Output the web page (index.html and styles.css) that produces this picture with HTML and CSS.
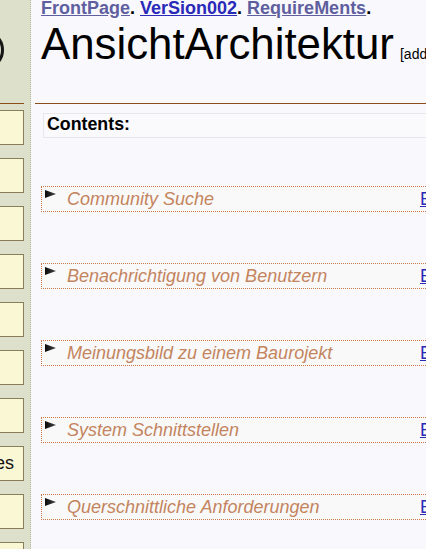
FILE: index.html
```html
<!DOCTYPE html>
<html lang="de">
<head>
<meta charset="utf-8">
<title>AnsichtArchitektur</title>
<link rel="stylesheet" href="styles.css">
</head>
<body>
<div class="page">
  <aside class="sidebar">
    <div class="logo">
      <svg class="logo-mark" width="12" height="103" viewBox="0 0 12 103">
        <ellipse cx="-7" cy="50" rx="9.5" ry="14" fill="none" stroke="#151515" stroke-width="3"/>
      </svg>
    </div>
    <div class="side-rule"></div>
    <nav class="side-nav">
      <a class="side-btn">Home</a>
      <a class="side-btn">Index</a>
      <a class="side-btn">Suche</a>
      <a class="side-btn">Hilfe</a>
      <a class="side-btn">Login</a>
      <a class="side-btn">Neu</a>
      <a class="side-btn">Info</a>
      <a class="side-btn">Changes</a>
      <a class="side-btn">Mehr</a>
      <a class="side-btn">Ende</a>
    </nav>
  </aside>
  <main class="main">
    <div class="crumbs"><a class="crumb visited" href="#">FrontPage</a>. <a class="crumb" href="#">VerSion002</a>. <a class="crumb visited" href="#">RequireMents</a>.</div>
    <h1 class="title">AnsichtArchitektur<span class="title-add">[add comment]</span></h1>
    <hr class="rule">
    <div class="contents">Contents:</div>
    <div class="section first"><svg class="tri" width="11" height="8" viewBox="0 0 11 8"><defs><linearGradient id="g1" x1="0" x2="1" y1="0" y2="0"><stop offset="0" stop-color="#0a0a0a"/><stop offset="1" stop-color="#444"/></linearGradient></defs><polygon points="0,0 11,4 0,8" fill="url(#g1)"/></svg><span class="sec-title">Community Suche</span><a class="sec-link" href="#">Edit</a></div>
    <div class="section"><svg class="tri" width="11" height="8" viewBox="0 0 11 8"><polygon points="0,0 11,4 0,8" fill="url(#g1)"/></svg><span class="sec-title">Benachrichtigung von Benutzern</span><a class="sec-link" href="#">Edit</a></div>
    <div class="section"><svg class="tri" width="11" height="8" viewBox="0 0 11 8"><polygon points="0,0 11,4 0,8" fill="url(#g1)"/></svg><span class="sec-title">Meinungsbild zu einem Baurojekt</span><a class="sec-link" href="#">Edit</a></div>
    <div class="section"><svg class="tri" width="11" height="8" viewBox="0 0 11 8"><polygon points="0,0 11,4 0,8" fill="url(#g1)"/></svg><span class="sec-title">System Schnittstellen</span><a class="sec-link" href="#">Edit</a></div>
    <div class="section"><svg class="tri" width="11" height="8" viewBox="0 0 11 8"><polygon points="0,0 11,4 0,8" fill="url(#g1)"/></svg><span class="sec-title">Querschnittliche Anforderungen</span><a class="sec-link" href="#">Edit</a></div>
  </main>
</div>
</body>
</html>
```
FILE: styles.css
```css
html, body {
  margin: 0;
  padding: 0;
  height: 100%;
  overflow: hidden;
  background: #f8f8fd;
  font-family: "Liberation Sans", Arial, sans-serif;
  color: #000;
}

.page {
  display: flex;
  align-items: stretch;
  min-height: 100%;
}

.sidebar {
  flex: 0 0 30px;
  width: 30px;
  background: #dde1cb;
  border-right: 1px dotted #b3bb98;
  display: flex;
  flex-direction: column;
  overflow: hidden;
}

.logo {
  height: 103px;
  overflow: hidden;
}

.logo-mark {
  display: block;
}

.side-rule {
  width: 24px;
  height: 1px;
  background: #8c4c1c;
}

.side-nav {
  display: flex;
  flex-direction: column;
  gap: 13px;
  margin-top: 6px;
}

.side-btn {
  display: flex;
  justify-content: flex-end;
  align-items: center;
  box-sizing: border-box;
  width: 24px;
  height: 35px;
  background: #faf7d4;
  border: 1px solid #8a7d5c;
  border-left: 0;
  overflow: hidden;
  white-space: nowrap;
  font-size: 18px;
  color: transparent;
  padding-right: 9px;
}

.side-btn:nth-child(8) {
  color: #111;
}

.main {
  flex: 0 0 auto;
  width: 423px;
  padding: 0 4px;
}

.crumbs {
  padding-left: 6px;
  font-weight: bold;
  font-size: 18px;
  line-height: 16px;
  white-space: nowrap;
}

.crumb {
  color: #2a2ab8;
  text-decoration: underline;
}

.crumb.visited {
  color: #5f5f9f;
}

.title {
  margin: 3px 0 0 6px;
  font-weight: normal;
  font-size: 43.8px;
  line-height: 50px;
  white-space: nowrap;
}

.title-add {
  font-size: 14px;
  line-height: 1;
  margin-left: 6px;
}

.rule {
  border: 0;
  height: 1px;
  background: #8c4c1c;
  margin: 34px 0 0;
}

.contents {
  margin: 9px 0 0 8px;
  border: 1px solid #e8e8ea;
  background: #fafafd;
  padding: 0 3px 2px;
  font-weight: bold;
  font-size: 17.8px;
  line-height: 21px;
}

.section {
  display: flex;
  align-items: flex-start;
  margin: 51px 0 0 6px;
  border: 1px dotted #c8784a;
  background: #f9f9f9;
  padding: 2px 6px 2px 3px;
  font-size: 18px;
  line-height: 20px;
}

.section.first {
  margin-top: 48px;
}

.tri {
  flex: 0 0 auto;
  margin-top: 1px;
}

.sec-title {
  margin-left: 11px;
  flex: 1 1 auto;
  font-style: italic;
  color: #c4845e;
  white-space: nowrap;
}

.sec-link {
  color: #2a2ab8;
  text-decoration: underline;
}
```
